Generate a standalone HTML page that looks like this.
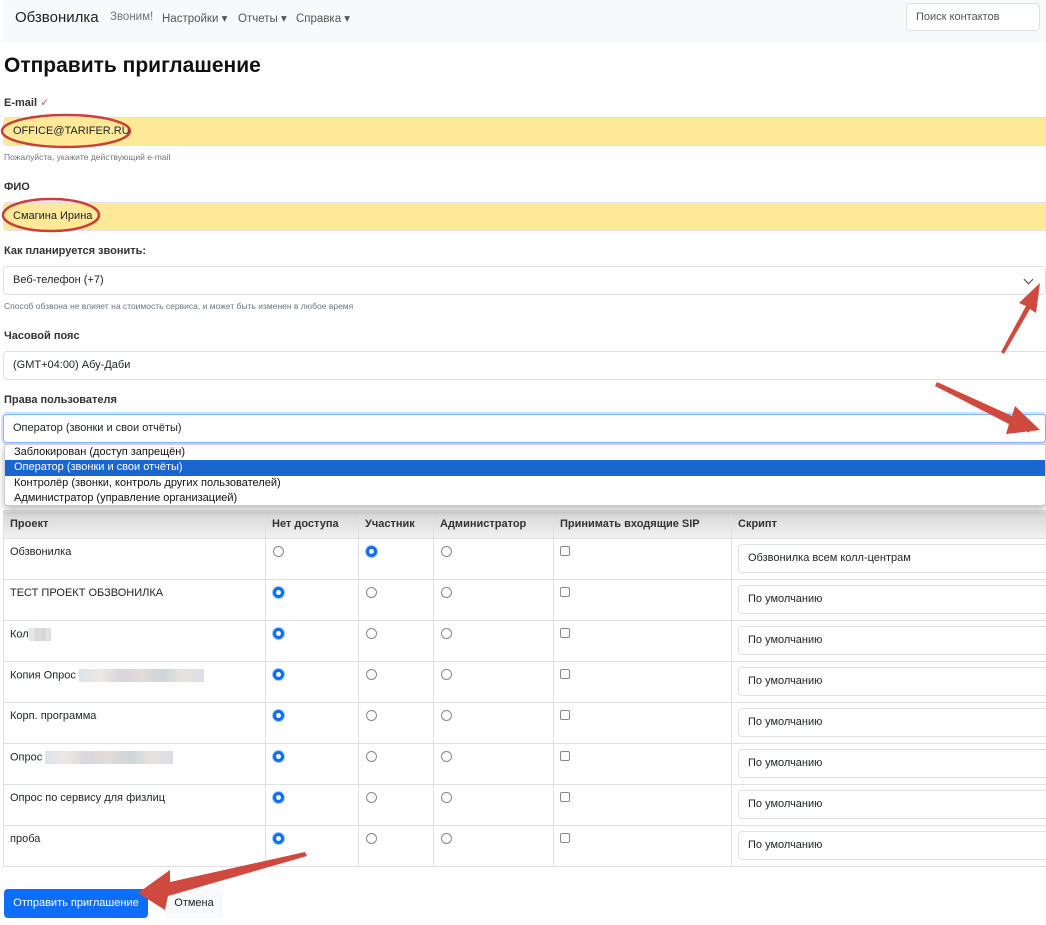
<!DOCTYPE html>
<html><head><meta charset="utf-8"><style>
*{box-sizing:border-box;margin:0;padding:0}
body{width:1046px;height:925px;overflow:hidden;background:#fff;font-family:"Liberation Sans","DejaVu Sans",sans-serif;color:#212529;position:relative}
.a{position:absolute;white-space:nowrap}
.nav{left:3px;top:0;width:1043px;height:42px;background:#f8f9fa}
.lbl{font-size:11px;font-weight:bold;color:#333}
.help{font-size:8.5px;color:#6c757d}
.inp{left:3px;width:1050px;height:29px;border:1px solid #dee2e6;border-radius:4px;font-size:11px;padding:0 9px;line-height:27px}
.y{background:#fee999}
.chev{position:absolute;right:13px;top:9px;width:7px;height:7px;border-right:1.5px solid #444;border-bottom:1.5px solid #444;transform:rotate(45deg)}
table{position:absolute;left:3px;top:510px;width:1060px;border-collapse:collapse;font-size:11px;table-layout:fixed}
td,th{border:1px solid #dee2e6;text-align:left;vertical-align:top;padding:7px 6px 0;height:41px;overflow:hidden;white-space:nowrap}
th{height:28px;font-weight:bold;color:#333;padding-top:7px;background:linear-gradient(#d6d6d6,#f2f2f2)}
.r{display:inline-block;width:11px;height:11px;border:1px solid #888;border-radius:50%;margin-left:1px}
.r.on{border:3px solid #0d6efd;background:#fff;box-shadow:0 0 0 1px #9ec5fe}
.c{display:inline-block;width:10px;height:10px;border:1px solid #888;border-radius:2px}
.s{display:block;border:1px solid #dee2e6;border-radius:4px;height:29px;line-height:27px;padding:0 9px;margin-top:-2px;width:330px}
.bl{display:inline-block;height:13px;vertical-align:middle;background:linear-gradient(90deg,#dde3ec,#ede8e2,#d8d6de,#e2dcd6,#ccd6dc,#e8e4dc,#dcdce8)}
</style></head><body>
<div class="a nav"></div>
<div class="a" style="left:15px;top:9px;font-size:15px;color:#222">Обзвонилка</div>
<div class="a" style="left:110px;top:11px;font-size:11.5px;color:#6c757d">Звоним!</div>
<div class="a" style="left:162px;top:11px;font-size:11.5px;color:#555">Настройки ▾</div>
<div class="a" style="left:238px;top:11px;font-size:11.5px;color:#555">Отчеты ▾</div>
<div class="a" style="left:296px;top:11px;font-size:11.5px;color:#555">Справка ▾</div>
<div class="a" style="left:906px;top:3px;width:134px;height:28px;background:#fff;border:1px solid #dee2e6;border-radius:4px;font-size:11px;color:#555;padding:7px 9px">Поиск контактов</div>

<div class="a" style="left:4px;top:54px;font-size:21px;font-weight:bold;color:#111">Отправить приглашение</div>

<div class="a lbl" style="left:4px;top:96px">E-mail <span style="color:#e05050">✓</span></div>
<div class="a inp y" style="top:117px">OFFICE@TARIFER.RU</div>
<div class="a help" style="left:4px;top:152px">Пожалуйста, укажите действующий e-mail</div>

<div class="a lbl" style="left:4px;top:181px">ФИО</div>
<div class="a inp y" style="top:202px">Смагина Ирина</div>

<div class="a lbl" style="left:4px;top:245px">Как планируется звонить:</div>
<div class="a inp" style="top:266px;width:1043px">Веб-телефон (+7)<span class="chev"></span></div>
<div class="a help" style="left:4px;top:301px">Способ обзвона не влияет на стоимость сервиса, и может быть изменен в любое время</div>

<div class="a lbl" style="left:4px;top:330px">Часовой пояс</div>
<div class="a inp" style="top:351px">(GMT+04:00) Абу-Даби</div>

<div class="a lbl" style="left:4px;top:394px">Права пользователя</div>
<div class="a inp" style="top:414px;width:1043px;border-color:#86b7fe;box-shadow:0 0 0 2px #cfe2ff">Оператор (звонки и свои отчёты)<span class="chev"></span></div>

<table>
<colgroup><col style="width:262px"><col style="width:93px"><col style="width:75px"><col style="width:120px"><col style="width:178px"><col></colgroup>
<tr><th>Проект</th><th>Нет доступа</th><th>Участник</th><th>Администратор</th><th>Принимать входящие SIP</th><th>Скрипт</th></tr>
<tr><td>Обзвонилка</td><td><span class="r"></span></td><td><span class="r on"></span></td><td><span class="r"></span></td><td><span class="c"></span></td><td><span class="s">Обзвонилка всем колл-центрам</span></td></tr>
<tr><td>ТЕСТ ПРОЕКТ ОБЗВОНИЛКА</td><td><span class="r on"></span></td><td><span class="r"></span></td><td><span class="r"></span></td><td><span class="c"></span></td><td><span class="s">По умолчанию</span></td></tr>
<tr><td>Кол<span class="bl" style="width:22px"></span></td><td><span class="r on"></span></td><td><span class="r"></span></td><td><span class="r"></span></td><td><span class="c"></span></td><td><span class="s">По умолчанию</span></td></tr>
<tr><td>Копия Опрос <span class="bl" style="width:125px"></span></td><td><span class="r on"></span></td><td><span class="r"></span></td><td><span class="r"></span></td><td><span class="c"></span></td><td><span class="s">По умолчанию</span></td></tr>
<tr><td>Корп. программа</td><td><span class="r on"></span></td><td><span class="r"></span></td><td><span class="r"></span></td><td><span class="c"></span></td><td><span class="s">По умолчанию</span></td></tr>
<tr><td>Опрос <span class="bl" style="width:128px"></span></td><td><span class="r on"></span></td><td><span class="r"></span></td><td><span class="r"></span></td><td><span class="c"></span></td><td><span class="s">По умолчанию</span></td></tr>
<tr><td>Опрос по сервису для физлиц</td><td><span class="r on"></span></td><td><span class="r"></span></td><td><span class="r"></span></td><td><span class="c"></span></td><td><span class="s">По умолчанию</span></td></tr>
<tr><td>проба</td><td><span class="r on"></span></td><td><span class="r"></span></td><td><span class="r"></span></td><td><span class="c"></span></td><td><span class="s">По умолчанию</span></td></tr>
</table>

<div class="a" style="left:4px;top:444px;width:1042px;height:62px;background:#fff;border:1px solid #ccc;border-radius:0 0 4px 4px;box-shadow:0 4px 8px rgba(0,0,0,.25);font-size:11px;line-height:15.3px;color:#111">
<div style="padding-left:9px">Заблокирован (доступ запрещён)</div>
<div style="padding-left:9px;background:#1a66d0;color:#fff">Оператор (звонки и свои отчёты)</div>
<div style="padding-left:9px">Контролёр (звонки, контроль других пользователей)</div>
<div style="padding-left:9px">Администратор (управление организацией)</div>
</div>

<div class="a" style="left:4px;top:889px;width:144px;height:29px;background:#0d6efd;border-radius:4px;color:#fff;font-size:11px;line-height:29px;text-align:center">Отправить приглашение</div>
<div class="a" style="left:165px;top:889px;width:58px;height:29px;background:#f8f9fa;border-radius:4px;color:#222;font-size:11px;line-height:29px;text-align:center">Отмена</div>

<svg class="a" style="left:0;top:0" width="1046" height="925">
<g fill="none" stroke="#c9403a" stroke-width="2.5">
<ellipse cx="66" cy="131" rx="64" ry="16"/>
<ellipse cx="51" cy="215" rx="48" ry="16"/>
</g>
<g fill="#d0493f">
<polygon points="1001,352 1026,306 1019,303 1040,283 1036,313 1030,309 1004,354"/>
<polygon points="937,382 1012,416 1015,406 1040,430 1006,434 1009,424 935,386"/>
<polygon points="305,852 170,882 170,870 138,893 165,910 168,896 307,856"/>
</g>
</svg>
</body></html>
